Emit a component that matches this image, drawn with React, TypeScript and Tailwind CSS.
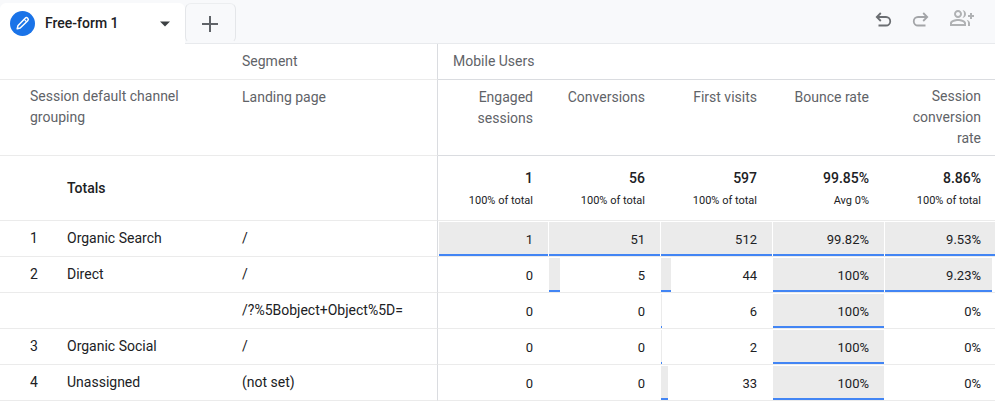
import { MdOutlineGroupAdd } from "react-icons/md";
import clsx from "clsx";

interface Metric {
  name: string;
  total: string;
  note: string;
  max: number;
  unit: string;
}

interface Row {
  index: string;
  channel: string;
  page: string;
  values: number[];
}

const metrics: Metric[] = [
  { name: "Engaged sessions", total: "1", note: "100% of total", max: 1, unit: "" },
  { name: "Conversions", total: "56", note: "100% of total", max: 51, unit: "" },
  { name: "First visits", total: "597", note: "100% of total", max: 512, unit: "" },
  { name: "Bounce rate", total: "99.85%", note: "Avg 0%", max: 99.82, unit: "%" },
  { name: "Session conversion rate", total: "8.86%", note: "100% of total", max: 9.53, unit: "%" },
];

const rows: Row[] = [
  { index: "1", channel: "Organic Search", page: "/", values: [1, 51, 512, 99.82, 9.53] },
  { index: "2", channel: "Direct", page: "/", values: [0, 5, 44, 100, 9.23] },
  { index: "", channel: "", page: "/?%5Bobject+Object%5D=", values: [0, 0, 6, 100, 0] },
  { index: "3", channel: "Organic Social", page: "/", values: [0, 0, 2, 100, 0] },
  { index: "4", channel: "Unassigned", page: "(not set)", values: [0, 0, 33, 100, 0] },
];

function UndoIcon({ className }: { className?: string }) {
  return (
    <svg className={className} width="18" height="16" viewBox="0 0 18 16" fill="none" stroke="currentColor" strokeWidth="1.8">
      <path d="M6.8 1 2.8 5l4 4" />
      <path d="M3 5h9a4.2 4.2 0 0 1 0 8.5H4.5" />
    </svg>
  );
}

function PencilIcon() {
  return (
    <svg width="25" height="25" viewBox="0 0 25 25" fill="none">
      <circle cx="12.5" cy="12.5" r="12.5" fill="#1a73e8" />
      <path d="M7.2 17.8 7.9 14.8l7.3-7.6a1.7 1.7 0 0 1 2.5 2.5L10.2 17z" stroke="#fff" strokeWidth="1.5" strokeLinejoin="round" />
      <path d="m14 8.2 2.7 2.7" stroke="#fff" strokeWidth="1.2" />
    </svg>
  );
}

function Tabs() {
  return (
    <header className="flex justify-between border-b border-[#e8eaed] bg-[#f8f9fb]">
      <div className="flex pt-[3px]">
        <button
          type="button"
          className="-mb-px flex h-[41px] w-[185px] items-center rounded-t-md bg-white pr-[14px] pl-[10px] text-sm font-medium text-[#202124]">
          <PencilIcon />
          <span className="ml-[10px] grow pb-px text-left">Free-form 1</span>
          <svg width="12" height="6" viewBox="0 0 12 6" fill="#3c4043">
            <path d="M1 0.5h10L6 5.5z" />
          </svg>
        </button>
        <button
          type="button"
          aria-label="Add tab"
          className="flex h-10 w-[51px] items-center justify-center rounded-md border border-t-[#eceef0] border-r-[#e4e6e9] border-b-transparent border-l-[#e4e6e9] pt-0.5 pr-px text-[#5f6368]">
          <svg width="16" height="16" viewBox="0 0 16 16" fill="currentColor">
            <path d="M7 0h2v7h7v2H9v7H7V9H0V7h7z" />
          </svg>
        </button>
      </div>
      <div className="flex items-center gap-5 pr-[21px] pb-[3px]">
        <button type="button" aria-label="Undo" className="text-[#6b6e72]">
          <UndoIcon />
        </button>
        <button type="button" aria-label="Redo" className="text-[#a3a5a8]">
          <UndoIcon className="-scale-x-100" />
        </button>
        <button type="button" aria-label="Share with people" className="pb-1 text-[#b0b2b4]">
          <MdOutlineGroupAdd className="size-6" />
        </button>
      </div>
    </header>
  );
}

function BarCell({ value, metric, first }: { value: number; metric: Metric; first: boolean }) {
  return (
    <td className="group border-b border-[#ebebeb] p-0">
      <div className={clsx("grid h-[35px] pt-px", first && "pl-px")}>
        {value > 0 && (
          <div className="col-start-1 row-start-1 mr-px group-last:mr-0">
            <div
              className="h-full border-b-2 border-[#4285f4] bg-[#ebebeb]"
              style={{ width: `${Math.min(value / metric.max, 1) * 100}%` }}
            />
          </div>
        )}
        <span className="col-start-1 row-start-1 self-center pt-0.5 pr-4 text-right text-[13px] group-last:pr-[14px]">
          {value}
          {metric.unit}
        </span>
      </div>
    </td>
  );
}

export default function App() {
  return (
    <main className="min-h-screen bg-white font-[Roboto,sans-serif] text-sm text-[#202124]">
      <Tabs />
      <table className="w-full table-fixed border-separate border-spacing-0">
        <colgroup>
          <col className="w-[67px]" />
          <col className="w-[175px]" />
          <col className="w-[196px]" />
          <col className="w-[111px]" />
          <col span={3} className="w-[112px]" />
          <col />
        </colgroup>
        <thead className="text-[#5f6368]">
          <tr className="h-9">
            <td colSpan={2} className="border-b border-[#ebebeb]" />
            <th scope="row" className="border-r border-b border-[#dadce0] border-b-[#ebebeb] p-0 pb-0.5 text-left font-normal">
              Segment
            </th>
            <th scope="colgroup" colSpan={5} className="border-b border-[#dadce0] pb-0.5 pl-[15px] text-left font-normal">
              Mobile Users
            </th>
          </tr>
          <tr className="align-top leading-[21px]">
            <th scope="col" colSpan={2} className="border-b border-[#ebebeb] py-[6px] pr-12 pl-[30px] text-left font-normal">
              Session default channel grouping
            </th>
            <th scope="col" className="border-r border-b border-[#dadce0] border-b-[#ebebeb] pt-[7px] text-left font-normal">
              Landing page
            </th>
            {metrics.map((metric) => (
              <th
                key={metric.name}
                scope="col"
                className="border-b border-[#dadce0] pt-[7px] pr-4 pl-[14px] text-right font-normal last:py-[6px] last:pr-[14px]">
                {metric.name}
              </th>
            ))}
          </tr>
        </thead>
        <tbody>
          <tr className="h-[65px]">
            <td className="border-b border-[#ebebeb]" />
            <th scope="row" className="border-b border-[#ebebeb] p-0 text-left font-medium">
              Totals
            </th>
            <td className="border-r border-b border-[#dadce0] border-b-[#ebebeb]" />
            {metrics.map((metric) => (
              <td key={metric.name} className="border-b border-[#ebebeb] pt-0.5 pr-4 text-right last:pr-[14px]">
                <div className="leading-6 font-medium">{metric.total}</div>
                <div className="text-[11px] leading-[22px]">{metric.note}</div>
              </td>
            ))}
          </tr>
          {rows.map((row) => (
            <tr key={row.channel + row.page}>
              <td className="border-b border-[#ebebeb] pb-0.5 pl-[30px]">{row.index}</td>
              <td className="border-b border-[#ebebeb] p-0 pb-0.5">{row.channel}</td>
              <td className="border-r border-b border-[#dadce0] border-b-[#ebebeb] p-0 pb-0.5">{row.page}</td>
              {row.values.map((value, i) => (
                <BarCell key={metrics[i].name} value={value} metric={metrics[i]} first={i === 0} />
              ))}
            </tr>
          ))}
        </tbody>
      </table>
    </main>
  );
}
